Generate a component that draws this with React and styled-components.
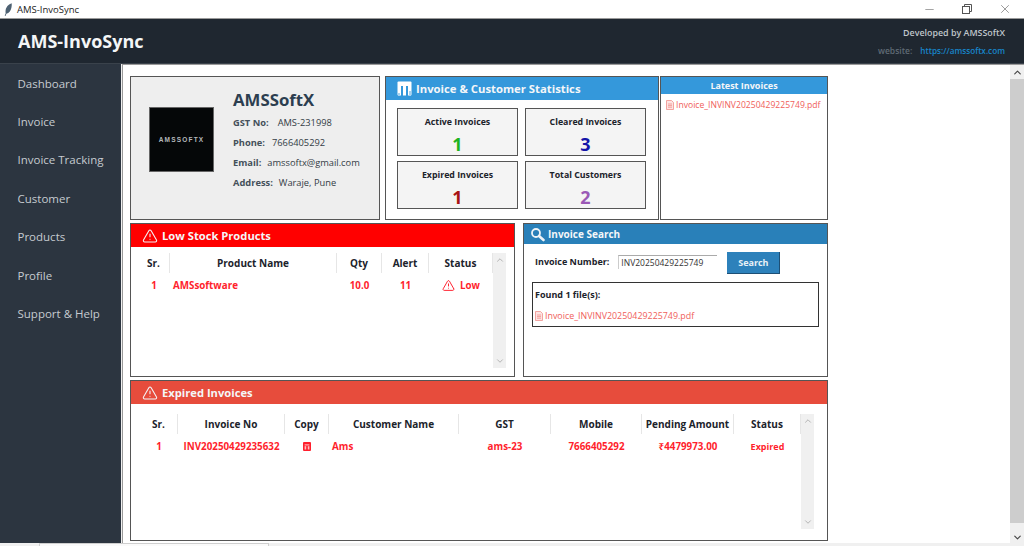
import React from "react";
import styled, { createGlobalStyle } from "styled-components";
import { TriangleAlert, Minus, X, ChevronUp, ChevronDown } from "lucide-react";

const GlobalStyle = createGlobalStyle`
  html, body {
    margin: 0;
    padding: 0;
    width: 1024px;
    height: 546px;
    overflow: hidden;
    background: #f0f0f0;
    font-family: "Open Sans", "Noto Sans", "Liberation Sans", sans-serif;
  }
  * { box-sizing: border-box; }
`;

const Window = styled.div`
  width: 1024px;
  height: 546px;
  display: flex;
  flex-direction: column;
  overflow: hidden;
`;

const TitleBar = styled.div`
  height: 19px;
  flex: none;
  background: #fff;
  border-bottom: 1px solid #9a9a9a;
  display: flex;
  align-items: center;
  padding-left: 4px;
  font-size: 9.5px;
  color: #222;
`;

const TitleText = styled.span`
  margin-left: 4px;
  flex: 1;
`;

const WinButton = styled.div`
  width: 38px;
  display: flex;
  justify-content: center;
  color: #555;
`;

const Header = styled.header`
  height: 45px;
  flex: none;
  background: #1f2730;
  border-bottom: 1px solid #3a424b;
  display: flex;
  justify-content: space-between;
  padding: 0 19px 0 18px;
`;

const Brand = styled.h1`
  margin: 0;
  align-self: center;
  font-size: 18px;
  font-weight: 700;
  color: #f4f6f7;
`;

const Credits = styled.div`
  display: flex;
  flex-direction: column;
  align-items: flex-end;
  padding-top: 8px;
  gap: 6px;
  font-size: 8.5px;
  font-weight: 600;
  line-height: 12px;
`;

const Developed = styled.span`
  font-size: 8.9px;
  color: #bfc5ca;
`;

const Website = styled.span`
  color: #5f6b75;
`;

const SiteLink = styled.span`
  font-size: 8.2px;
  color: #1785c9;
  margin-left: 8px;
`;

const Body = styled.div`
  flex: 1;
  min-height: 0;
  display: flex;
`;

const Sidebar = styled.nav`
  width: 121px;
  flex: none;
  background: #2c3540;
  display: flex;
  flex-direction: column;
`;

const NavItem = styled.div`
  height: 38.4px;
  padding-left: 17.5px;
  display: flex;
  align-items: center;
  font-size: 11.5px;
  color: #c6cbd0;
`;

const Main = styled.main`
  flex: 1;
  min-width: 0;
  margin-left: 1px;
  background: #fff;
  border-top: 1px solid #9a9a9a;
  border-left: 1px solid #9a9a9a;
  display: flex;
`;

const Content = styled.div`
  flex: 1;
  min-width: 0;
  padding: 11px 0 0 7px;
  display: flex;
  flex-direction: column;
  gap: 3px;
`;

const TopRow = styled.div`
  display: flex;
  height: 144px;
  flex: none;
`;

const MiddleRow = styled.div`
  display: flex;
  height: 154px;
  flex: none;
  gap: 8px;
`;

const Panel = styled.section`
  width: ${(p) => p.$w}px;
  height: ${(p) => (p.$h ? `${p.$h}px` : "auto")};
  margin-left: ${(p) => p.$ml || 0}px;
  flex: none;
  border: 1px solid #555;
  background: ${(p) => p.$bg || "#fff"};
  display: flex;
  flex-direction: column;
`;

const PanelHead = styled.div`
  height: ${(p) => p.$h}px;
  flex: none;
  background: ${(p) => p.$bg};
  color: #f4f6f8;
  font-weight: 700;
  font-size: ${(p) => p.$fs || 11.2}px;
  display: flex;
  align-items: center;
  justify-content: ${(p) => (p.$center ? "center" : "flex-start")};
  gap: ${(p) => p.$gap || 4}px;
  padding-left: ${(p) => (p.$center ? 0 : p.$pl || 11)}px;
`;

const Profile = styled.div`
  flex: 1;
  display: flex;
  padding: 30px 0 0 18px;
`;

const Logo = styled.div`
  width: 65px;
  height: 65px;
  flex: none;
  background: #050708;
  border: 1px solid #666;
  display: flex;
  align-items: center;
  justify-content: center;
  color: #b4b8bb;
  font-size: 6.5px;
  font-weight: 700;
  letter-spacing: 1.2px;
  font-family: "Liberation Sans", sans-serif;
`;

const ProfileInfo = styled.div`
  margin: -19px 0 0 19px;
  display: flex;
  flex-direction: column;
`;

const Company = styled.div`
  font-size: 16.8px;
  font-weight: 700;
  color: #2c3e50;
  line-height: 24px;
`;

const InfoLine = styled.div`
  height: 20px;
  display: flex;
  align-items: center;
  font-size: 9.3px;
  color: #333c45;
`;

const InfoLabel = styled.b`
  font-weight: 700;
  color: #44505a;
  margin-right: ${(p) => p.$gap}px;
`;

const StatsGrid = styled.div`
  display: grid;
  grid-template-columns: 121px 121px;
  grid-auto-rows: 48px;
  column-gap: 7px;
  row-gap: 5px;
  padding: 8px 0 0 11px;
`;

const StatCard = styled.div`
  background: #f4f4f4;
  border: 1px solid #555;
  display: flex;
  flex-direction: column;
  align-items: center;
  padding-top: 6px;
`;

const StatLabel = styled.div`
  font-size: 8.8px;
  font-weight: 700;
  color: #1c232b;
  line-height: 14px;
`;

const StatValue = styled.div`
  font-size: 18px;
  font-weight: 700;
  line-height: 24px;
  margin-top: 3px;
  color: ${(p) => p.$color};
`;

const FileLink = styled.div`
  display: flex;
  align-items: center;
  gap: 2px;
  font-size: ${(p) => p.$fs || 8.9}px;
  line-height: 14px;
  color: #f0605a;
  padding: ${(p) => p.$pad || "0"};
`;

const TableWrap = styled.div`
  flex: 1;
  min-height: 0;
  display: flex;
  align-items: flex-start;
  padding: ${(p) => p.$pad};
`;

const Table = styled.div`
  flex: none;
  display: flex;
  flex-direction: column;
`;

const Row = styled.div`
  display: flex;
  height: ${(p) => p.$h}px;
  align-items: center;
`;

const HeadCell = styled.div`
  width: ${(p) => p.$w}px;
  height: 100%;
  flex: none;
  display: flex;
  align-items: center;
  justify-content: center;
  font-size: 10px;
  font-weight: 700;
  color: #1c232b;
  border-right: 1px solid #e6e6e6;
  white-space: nowrap;
`;

const Cell = styled.div`
  width: ${(p) => p.$w}px;
  flex: none;
  display: flex;
  align-items: center;
  gap: 5px;
  justify-content: ${(p) => (p.$left ? "flex-start" : "center")};
  padding-left: ${(p) => p.$pl || 0}px;
  font-size: ${(p) => p.$fs || 9.8}px;
  font-weight: 700;
  color: #ff1f2d;
  white-space: nowrap;
`;

const VBar = styled.div`
  width: 13px;
  height: ${(p) => p.$h}px;
  flex: none;
  background: #f0f0f0;
  display: flex;
  flex-direction: column;
  justify-content: space-between;
  align-items: center;
  color: #a8a8a8;
  padding: 2px 0;
`;

const SearchRow = styled.div`
  display: flex;
  align-items: center;
  padding: 8px 0 0 11px;
`;

const SearchLabel = styled.label`
  font-size: 9px;
  font-weight: 700;
  color: #1c232b;
  margin-bottom: 3px;
`;

const SearchInput = styled.input`
  width: 99px;
  height: 14px;
  margin: 0 0 3px 9px;
  padding: 0 0 0 2px;
  border: none;
  border-top: 1px solid #aaa;
  border-left: 1px solid #ccc;
  font: 400 8.5px "Open Sans", sans-serif;
  color: #333;
  background: #fff;
  outline: none;
`;

const SearchButton = styled.button`
  width: 53px;
  height: 22px;
  margin-left: 10px;
  background: #2d81bb;
  color: #e8f1f7;
  border: none;
  border-right: 1px solid #1d4f75;
  border-bottom: 1px solid #1d4f75;
  font: 700 9px "Open Sans", sans-serif;
`;

const FoundBox = styled.div`
  margin: 8px 8px 0 8px;
  height: 45px;
  border: 1px solid #333;
  padding: 5px 0 0 2px;
`;

const FoundTitle = styled.div`
  font-size: 9px;
  font-weight: 700;
  color: #1c232b;
  line-height: 14px;
  margin-bottom: 7px;
`;

const PageScroll = styled.div`
  width: 14px;
  flex: none;
  background: #cdcdcd;
  display: flex;
  flex-direction: column;
  justify-content: space-between;
  align-items: center;
  color: #444;
`;

const ScrollCap = styled.div`
  width: 14px;
  height: ${(p) => p.$h}px;
  background: #f0f0f0;
  display: flex;
  align-items: ${(p) => p.$align};
  justify-content: center;
`;

const BottomStrip = styled.div`
  height: 3px;
  flex: none;
  background: #f0f0f0;
  padding-left: 39px;
`;

const StripTab = styled.div`
  width: 230px;
  height: 3px;
  background: #fafafa;
  border: 1px solid #cfcfcf;
  border-bottom: none;
`;

const StatsIcon = () => (
  <svg width="15" height="15" viewBox="0 0 15 15">
    <rect x="0.5" y="0.5" width="14" height="14" rx="1" fill="#fff" />
    <rect x="4" y="5" width="2" height="10" fill="#3498db" />
    <rect x="9" y="5" width="2" height="10" fill="#3498db" />
    <rect x="1" y="12" width="2" height="3" fill="#a9d3ef" />
    <rect x="12" y="10" width="2" height="5" fill="#a9d3ef" />
  </svg>
);

const SearchIcon = () => (
  <svg width="15" height="15" viewBox="0 0 15 15" fill="none">
    <circle cx="6" cy="6" r="4" stroke="#eef3f7" strokeWidth="1.8" />
    <path d="M9 9l4.5 4" stroke="#eef3f7" strokeWidth="2.6" strokeLinecap="round" />
  </svg>
);

const PdfIcon = () => (
  <svg width="8" height="10" viewBox="0 0 8 10" fill="none" stroke="#f0908c" strokeWidth="0.8">
    <path d="M0.5 0.5h5l2 2v7h-7z" fill="#fde3e2" />
    <path d="M2 4h4M2 5.6h4M2 7.2h4" />
  </svg>
);

const CopyIcon = () => (
  <svg width="8" height="9" viewBox="0 0 8 9">
    <rect width="8" height="9" rx="1" fill="#ff1f2d" />
    <rect x="1.6" y="2.4" width="4.8" height="1" fill="#ffd5d5" />
    <rect x="1.6" y="4.2" width="1.6" height="3.3" fill="#ffc0c0" />
    <rect x="4.8" y="4.2" width="1.6" height="3.3" fill="#ffc0c0" />
  </svg>
);

const Feather = () => (
  <svg width="9" height="13" viewBox="0 0 9 13">
    <path d="M8.5 0.3C5 1 2.2 3.6 1.6 7.2c-.2 1.2-.1 2.2.1 3L.7 12.7l.8.2.9-2.2c2.6-.5 4.3-3 5-6 .3-1.7.6-3.1.1-4.4z" fill="#4d6172" />
  </svg>
);

const Restore = () => (
  <svg width="10" height="10" viewBox="0 0 10 10" fill="none" stroke="#555" strokeWidth="1">
    <rect x="0.5" y="2.5" width="7" height="7" />
    <path d="M2.5 2.5v-2h7v7h-2" />
  </svg>
);

const navItems = [
  "Dashboard",
  "Invoice",
  "Invoice Tracking",
  "Customer",
  "Products",
  "Profile",
  "Support & Help",
];

const stats = [
  { label: "Active Invoices", value: 1, color: "#1fb31f" },
  { label: "Cleared Invoices", value: 3, color: "#1414a8" },
  { label: "Expired Invoices", value: 1, color: "#a81414" },
  { label: "Total Customers", value: 2, color: "#9b59b6" },
];

const stockCols = [
  { title: "Sr.", w: 32 },
  { title: "Product Name", w: 167 },
  { title: "Qty", w: 45 },
  { title: "Alert", w: 47 },
  { title: "Status", w: 64 },
];

const expiredCols = [
  { title: "Sr.", w: 38 },
  { title: "Invoice No", w: 107 },
  { title: "Copy", w: 44 },
  { title: "Customer Name", w: 130 },
  { title: "GST", w: 92 },
  { title: "Mobile", w: 91 },
  { title: "Pending Amount", w: 92 },
  { title: "Status", w: 67 },
];

export default function App() {
  return (
    <Window>
      <GlobalStyle />
      <TitleBar>
        <Feather />
        <TitleText>AMS-InvoSync</TitleText>
        <WinButton><Minus size={13} strokeWidth={1} /></WinButton>
        <WinButton><Restore /></WinButton>
        <WinButton><X size={14} strokeWidth={1} /></WinButton>
      </TitleBar>
      <Header>
        <Brand>AMS-InvoSync</Brand>
        <Credits>
          <Developed>Developed by AMSSoftX</Developed>
          <Website>website:<SiteLink>https://amssoftx.com</SiteLink></Website>
        </Credits>
      </Header>
      <Body>
        <Sidebar>
          {navItems.map((item) => (
            <NavItem key={item}>{item}</NavItem>
          ))}
        </Sidebar>
        <Main>
          <Content>
            <TopRow>
              <Panel $w={250} $bg="#eeeeee">
                <Profile>
                  <Logo>AMSSOFTX</Logo>
                  <ProfileInfo>
                    <Company>AMSSoftX</Company>
                    <InfoLine><InfoLabel $gap={9}>GST No:</InfoLabel>AMS-231998</InfoLine>
                    <InfoLine><InfoLabel $gap={7}>Phone:</InfoLabel>7666405292</InfoLine>
                    <InfoLine><InfoLabel $gap={6}>Email:</InfoLabel>amssoftx@gmail.com</InfoLine>
                    <InfoLine><InfoLabel $gap={6}>Address:</InfoLabel>Waraje, Pune</InfoLine>
                  </ProfileInfo>
                </Profile>
              </Panel>
              <Panel $w={274} $ml={5}>
                <PanelHead $h={23} $bg="#3498db" $fs={11.3}>
                  <StatsIcon />
                  Invoice &amp; Customer Statistics
                </PanelHead>
                <StatsGrid>
                  {stats.map((s) => (
                    <StatCard key={s.label}>
                      <StatLabel>{s.label}</StatLabel>
                      <StatValue $color={s.color}>{s.value}</StatValue>
                    </StatCard>
                  ))}
                </StatsGrid>
              </Panel>
              <Panel $w={168} $ml={1}>
                <PanelHead $h={17} $bg="#3498db" $fs={9} $center>Latest Invoices</PanelHead>
                <FileLink $fs={8.6} $pad="4px 0 0 5px"><PdfIcon />Invoice_INVINV20250429225749.pdf</FileLink>
              </Panel>
            </TopRow>
            <MiddleRow>
              <Panel $w={385}>
                <PanelHead $h={23} $bg="#ff0000">
                  <TriangleAlert size={16} strokeWidth={1.6} />
                  Low Stock Products
                </PanelHead>
                <TableWrap $pad="6px 0 0 7px">
                  <Table>
                    <Row $h={20}>
                      {stockCols.map((c) => (
                        <HeadCell key={c.title} $w={c.w}>{c.title}</HeadCell>
                      ))}
                    </Row>
                    <Row $h={25}>
                      <Cell $w={32}>1</Cell>
                      <Cell $w={167} $left $pl={3}>AMSsoftware</Cell>
                      <Cell $w={45}>10.0</Cell>
                      <Cell $w={47}>11</Cell>
                      <Cell $w={64}><TriangleAlert size={13} strokeWidth={1.8} />Low</Cell>
                    </Row>
                  </Table>
                  <VBar $h={115}>
                    <ChevronUp size={10} />
                    <ChevronDown size={10} />
                  </VBar>
                </TableWrap>
              </Panel>
              <Panel $w={305}>
                <PanelHead $h={20} $bg="#2980b9" $fs={10} $pl={6} $gap={3}>
                  <SearchIcon />
                  Invoice Search
                </PanelHead>
                <SearchRow>
                  <SearchLabel>Invoice Number:</SearchLabel>
                  <SearchInput readOnly value="INV20250429225749" />
                  <SearchButton>Search</SearchButton>
                </SearchRow>
                <FoundBox>
                  <FoundTitle>Found 1 file(s):</FoundTitle>
                  <FileLink><PdfIcon />Invoice_INVINV20250429225749.pdf</FileLink>
                </FoundBox>
              </Panel>
            </MiddleRow>
            <Panel $w={698} $h={161}>
              <PanelHead $h={23} $bg="#e74c3c">
                <TriangleAlert size={16} strokeWidth={1.6} />
                Expired Invoices
              </PanelHead>
              <TableWrap $pad="10px 0 0 9px">
                <Table>
                  <Row $h={20}>
                    {expiredCols.map((c) => (
                      <HeadCell key={c.title} $w={c.w}>{c.title}</HeadCell>
                    ))}
                  </Row>
                  <Row $h={25}>
                    <Cell $w={38}>1</Cell>
                    <Cell $w={107}>INV20250429235632</Cell>
                    <Cell $w={44}><CopyIcon /></Cell>
                    <Cell $w={130} $left $pl={3}>Ams</Cell>
                    <Cell $w={92}>ams-23</Cell>
                    <Cell $w={91}>7666405292</Cell>
                    <Cell $w={92}>₹4479973.00</Cell>
                    <Cell $w={67} $fs={9}>Expired</Cell>
                  </Row>
                </Table>
                <VBar $h={115}>
                  <ChevronUp size={10} />
                  <ChevronDown size={10} />
                </VBar>
              </TableWrap>
            </Panel>
          </Content>
          <PageScroll>
            <ScrollCap $h={14} $align="center"><ChevronUp size={11} strokeWidth={2.5} /></ScrollCap>
            <ScrollCap $h={20} $align="flex-end"><ChevronDown size={11} strokeWidth={2.5} /></ScrollCap>
          </PageScroll>
        </Main>
      </Body>
      <BottomStrip><StripTab /></BottomStrip>
    </Window>
  );
}
